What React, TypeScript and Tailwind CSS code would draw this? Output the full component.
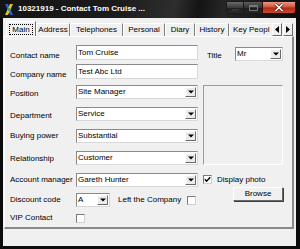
import React from "react";

const sunken = "border border-t-[#8a8a8a] border-l-[#8a8a8a] border-b-[#d8d8d8] border-r-[#d8d8d8]";

function Arrow() {
  return (
    <svg width="6" height="4" viewBox="0 0 6 4">
      <polygon points="0,0.5 6,0.5 3,3.5" fill="#000" />
    </svg>
  );
}

function TextBox({ value, w = "w-[122px]" }: { value: string; w?: string }) {
  return (
    <div className={`${w} h-[15px] bg-white ${sunken} flex items-center pl-[1px] whitespace-nowrap overflow-hidden`}>
      {value}
    </div>
  );
}

function Combo({ value, w = "w-[122px]", h = "h-[14px]" }: { value: string; w?: string; h?: string }) {
  return (
    <div className={`${w} ${h} bg-white ${sunken} flex items-stretch`}>
      <div className="flex-1 flex items-center pl-[1px] whitespace-nowrap overflow-hidden">{value}</div>
      <div className="w-[11px] my-[1px] mr-[1px] bg-[#ececec] border border-t-white border-l-white border-b-[#6a6a6a] border-r-[#6a6a6a] flex items-center justify-center">
        <Arrow />
      </div>
    </div>
  );
}

function Check({ checked = false }: { checked?: boolean }) {
  return (
    <div className="w-[9px] h-[9px] bg-white border border-t-[#7a7a7a] border-l-[#7a7a7a] border-b-[#d0d0d0] border-r-[#d0d0d0] flex items-center justify-center shrink-0">
      {checked && (
        <svg width="7" height="7" viewBox="0 0 7 7">
          <polyline points="0.8,3.3 2.6,5.2 6.2,1.2" fill="none" stroke="#000" strokeWidth="1.4" />
        </svg>
      )}
    </div>
  );
}

function Row({
  label,
  mt,
  h,
  lp = "",
  children,
}: {
  label: string;
  mt: string;
  h: string;
  lp?: string;
  children: React.ReactNode;
}) {
  return (
    <div className={`flex items-center ${mt} ${h}`}>
      <span className={`w-[66px] shrink-0 whitespace-nowrap ${lp}`}>{label}</span>
      {children}
    </div>
  );
}

function TitleBar() {
  return (
    <div className="h-[18px] flex items-start bg-[linear-gradient(100deg,#141414_0%,#1c1c1c_40%,#2e2e2e_58%,#141414_66%,#262626_74%,#0c0c0c_100%)]">
      <div className="ml-[5px] mt-[4px] w-[8px] h-[11px]">
        <svg width="8" height="11" viewBox="0 0 8 11">
          <polygon points="0,0 3,0 8,11 5,11" fill="#2a5cd8" />
          <polygon points="8,0 5,0 0,11 3,11" fill="#e8c020" />
          <rect x="3" y="4" width="2" height="3" fill="#30b040" />
        </svg>
      </div>
      <span className="ml-[5px] mt-[4px] text-white font-bold text-[8px] leading-[10px] whitespace-nowrap">
        10321919 - Contact Tom Cruise ...
      </span>
      <div className="ml-auto mr-[4px] mt-[1px] flex h-[13px]">
        <div className="w-[18px] h-full rounded-bl-[3px] border border-[#1a1a1a] bg-[linear-gradient(#6a6a6a,#3a3a3a_50%,#1e1e1e_51%,#2a2a2a)] flex items-end justify-center pb-[2px]">
          <div className="w-[7px] h-[2px] bg-[#e8e8e8] border border-[#333]" />
        </div>
        <div className="w-[18px] h-full border-y border-[#1a1a1a] bg-[linear-gradient(#5a5a5a,#333_50%,#1a1a1a_51%,#262626)] flex items-center justify-center">
          <div className="w-[9px] h-[6px] border border-[#777] border-t-2" />
        </div>
        <div className="w-[34px] h-full rounded-br-[3px] border border-[#3a0a0a] bg-[linear-gradient(#e89a88,#d0503a_48%,#b02818_52%,#c84a30)] flex items-center justify-center">
          <svg width="10" height="9" viewBox="0 0 10 9">
            <path d="M1.5 1 L8.5 8 M8.5 1 L1.5 8" stroke="#5a1a10" strokeWidth="3" />
            <path d="M1.5 1 L8.5 8 M8.5 1 L1.5 8" stroke="#fff" strokeWidth="1.6" />
          </svg>
        </div>
      </div>
    </div>
  );
}

const tabs: { name: string; w: string; last?: boolean }[] = [
  { name: "Address", w: "w-[34px]" },
  { name: "Telephones", w: "w-[53px]" },
  { name: "Personal", w: "w-[42px]" },
  { name: "Diary", w: "w-[30px]" },
  { name: "History", w: "w-[34px]" },
  { name: "Key Peopl", w: "w-[42px]", last: true },
];

function Tabs() {
  return (
    <div className="flex items-end h-[18px]">
      <div className="flex items-end w-[268px] h-full pl-[3px] overflow-hidden">
        <div className="relative z-10 mb-[-1px] w-[30px] h-[16px] shrink-0 bg-[#f0f0f0] border-t border-l border-r border-t-white border-l-white border-r-[#707070] flex items-center justify-center">
          <span className="border border-dotted border-black px-[2px] leading-[9px]">Main</span>
        </div>
        {tabs.map((t) => (
          <div
            key={t.name}
            className={`${t.w} h-[13px] shrink-0 border-t border-l border-t-white border-l-white ${
              t.last ? "justify-start pl-[3px]" : "border-r border-r-[#808080] justify-center"
            } flex items-center whitespace-nowrap`}
          >
            {t.name}
          </div>
        ))}
      </div>
      <div className="ml-[1px] flex gap-[1px]">
        {["M6 1 L2 4.5 L6 8 Z", "M2 1 L6 4.5 L2 8 Z"].map((d) => (
          <div
            key={d}
            className="w-[10px] h-[13px] bg-[#f0f0f0] border border-t-white border-l-white border-b-[#6a6a6a] border-r-[#6a6a6a] flex items-center justify-center"
          >
            <svg width="8" height="9" viewBox="0 0 8 9">
              <path d={d} fill="#000" />
            </svg>
          </div>
        ))}
      </div>
    </div>
  );
}

export default function App() {
  return (
    <div className="w-[300px] h-[249px] bg-[#0c0c0c] flex flex-col font-['Liberation_Sans',Arial,sans-serif] text-[8px] leading-[10px] text-black overflow-hidden">
      <TitleBar />
      <div className="flex-1 ml-[3px] mr-[4px] mb-[3px] bg-[#f0f0f0] flex flex-col">
        <Tabs />
        <div className="ml-[1px] mr-[2px] h-[193px] border-t border-l border-t-white border-l-white border-r-2 border-b-2 border-r-[#8a8a8a] border-b-[#8a8a8a] flex">
          <div className="w-[193px] pl-[5px] pt-[8px] flex flex-col">
            <Row label="Contact name" mt="" h="h-[15px]" lp="pt-[6px]">
              <TextBox value="Tom Cruise" />
            </Row>
            <Row label="Company name" mt="mt-[4px]" h="h-[15px]" lp="pt-[6px]">
              <TextBox value="Test Abc Ltd" />
            </Row>
            <Row label="Position" mt="mt-[6px]" h="h-[14px]" lp="pt-[3px]">
              <Combo value="Site Manager" />
            </Row>
            <Row label="Department" mt="mt-[8px]" h="h-[14px]" lp="pt-[3px]">
              <Combo value="Service" />
            </Row>
            <Row label="Buying power" mt="mt-[8px]" h="h-[14px]">
              <Combo value="Substantial" />
            </Row>
            <Row label="Relationship" mt="mt-[8px]" h="h-[14px]" lp="pt-[2px]">
              <Combo value="Customer" />
            </Row>
            <Row label="Account manager" mt="mt-[8px]" h="h-[14px]">
              <Combo value="Gareth Hunter" />
            </Row>
            <Row label="Discount code" mt="mt-[6px]" h="h-[14px]">
              <Combo value="A" w="w-[34px]" />
              <span className="ml-[8px] whitespace-nowrap">Left the Company</span>
              <div className="ml-[6px]">
                <Check />
              </div>
            </Row>
            <Row label="VIP Contact" mt="mt-[5px]" h="h-[12px]">
              <Check />
            </Row>
          </div>
          <div className="ml-[5px] w-[80px] pt-[10px] flex flex-col">
            <div className="flex items-center h-[14px]">
              <span className="ml-[4px] pt-[4px]">Title</span>
              <div className="ml-auto">
                <Combo value="Mr" w="w-[48px]" />
              </div>
            </div>
            <div className="mt-[24px] w-[80px] h-[80px] border border-t-[#9a9a9a] border-l-[#9a9a9a] border-b-white border-r-white" />
            <div className="mt-[10px] flex items-center h-[9px]">
              <Check checked />
              <span className="ml-[5px] whitespace-nowrap">Display photo</span>
            </div>
            <div className="mt-[3px] ml-auto w-[50px] h-[14px] bg-[#f0f0f0] border border-t-white border-l-white border-b-[#6a6a6a] border-r-[#6a6a6a] shadow-[1px_1px_0_#404040] flex items-center justify-center">
              Browse
            </div>
          </div>
        </div>
      </div>
    </div>
  );
}
